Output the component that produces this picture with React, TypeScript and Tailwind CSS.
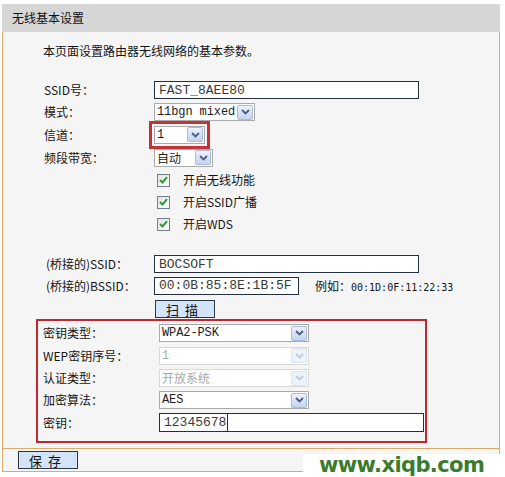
import React from "react";

const ArrowBtn = ({ disabled }: { disabled?: boolean }) => (
  <span
    className={`ml-auto mr-px flex h-[15px] w-[16px] shrink-0 items-center justify-center rounded-[2px] border ${
      disabled
        ? "border-[#dde4ef] bg-[#eef2f9]"
        : "border-[#a9bbdc] bg-gradient-to-b from-[#eef3fc] to-[#c3d3ee]"
    }`}
  >
    <svg width="9" height="6" viewBox="0 0 9 6">
      <path
        d="M1 1 L4.5 4.5 L8 1"
        fill="none"
        stroke={disabled ? "#c2cbdb" : "#4a5d80"}
        strokeWidth="1.8"
      />
    </svg>
  </span>
);

const Select = ({
  value,
  className,
  disabled,
  mono = true,
}: {
  value: string;
  className: string;
  disabled?: boolean;
  mono?: boolean;
}) => (
  <div
    className={`flex h-[18px] items-center overflow-hidden border bg-white pl-[2px] text-[12px] ${
      mono ? "font-['Liberation_Mono',monospace] tracking-[-0.1px]" : ""
    } ${
      disabled
        ? "border-[#d8d8d8] text-[#a9a9a9]"
        : "border-[#a9a9a9] text-[#1c1c1c]"
    } ${className}`}
  >
    <span className="whitespace-nowrap leading-none">{value}</span>
    <ArrowBtn disabled={disabled} />
  </div>
);

const TextInput = ({
  value,
  className,
}: {
  value: string;
  className: string;
}) => (
  <div
    className={`flex h-[18px] items-center border border-[#22303e] bg-white pl-[4px] font-['Liberation_Mono',monospace] text-[13px] leading-none text-[#3a3a3a] ${className}`}
  >
    {value}
  </div>
);

const Check = ({ label }: { label: string }) => (
  <div className="flex h-[22px] items-center">
    <span className="ml-[3px] flex h-[13px] w-[13px] items-center justify-center border border-[#6f8192] bg-gradient-to-br from-[#e2e2dc] to-white">
      <svg width="9" height="8" viewBox="0 0 9 8">
        <path d="M1 4 L3.5 6.5 L8 1.2" fill="none" stroke="#2d9a37" strokeWidth="2" />
      </svg>
    </span>
    <span className="ml-[13px]">{label}</span>
  </div>
);

const Row = ({
  label,
  children,
  h = "h-[22px]",
  pl = "pl-[41px]",
  lw = "w-[110px]",
}: {
  label?: string;
  children: React.ReactNode;
  h?: string;
  pl?: string;
  lw?: string;
}) => (
  <div className={`flex items-center ${h} ${pl}`}>
    <span className={`shrink-0 ${lw}`}>{label}</span>
    {children}
  </div>
);

export default function App() {
  return (
    <div className="relative h-[477px] w-[505px] overflow-hidden bg-white px-[2px] pt-[4px] font-['Noto_Sans_CJK_SC',sans-serif] text-[12px] text-[#141414]">
      <div className="w-[498px]">
        <div className="flex h-[28px] items-center bg-[#d6d6d6] pl-[10px] text-[12px] text-[#111]">
          无线基本设置
        </div>

        <div className="flex flex-col border-x border-b border-[#dcab68] bg-[#f5f5f5] pb-[5px]">
          <div className="mt-[10px] flex h-[18px] items-center pl-[40px]">
            本页面设置路由器无线网络的基本参数。
          </div>

          <div className="mt-[19px] flex flex-col">
            <Row label="SSID号：">
              <TextInput value="FAST_8AEE80" className="w-[265px]" />
            </Row>
            <Row label="模式：">
              <Select value="11bgn mixed" className="w-[101px]" />
            </Row>
            <Row label="信道：" h="h-[23px]">
              <div className="outline-[3px] outline-offset-[2px] outline-[#c1353a] outline">
                <Select value="1" className="w-[51px]" />
              </div>
            </Row>
            <Row label="频段带宽：" h="h-[23px]">
              <Select value="自动" mono={false} className="w-[59px]" />
            </Row>
            <Row>
              <Check label="开启无线功能" />
            </Row>
            <Row>
              <Check label="开启SSID广播" />
            </Row>
            <Row>
              <Check label="开启WDS" />
            </Row>
          </div>

          <div className="mt-[18px] flex flex-col">
            <Row label="(桥接的)SSID：" pl="pl-[43px]" lw="w-[108px]">
              <TextInput value="BOCSOFT" className="w-[265px]" />
            </Row>
            <Row label="(桥接的)BSSID：" pl="pl-[43px]" lw="w-[108px]" h="h-[21px]">
              <TextInput value="00:0B:85:8E:1B:5F" className="w-[145px]" />
              <span className="ml-[16px]">
                例如：
                <span className="font-['DejaVu_Sans_Mono',monospace] text-[10px]">
                  00:1D:0F:11:22:33
                </span>
              </span>
            </Row>
            <div className="mt-[4px] flex h-[18px] pl-[152px]">
              <button className="h-[18px] w-[60px] border border-[#2c3644] bg-[#d3e3f8] text-[13px] leading-none tracking-[6px] text-[#111]">
                扫描
              </button>
            </div>
          </div>

          <div className="ml-[33px] mt-[1px] flex w-[391px] flex-col border-[2px] border-[#c1272d] pb-[7px] pt-px">
            <Row label="密钥类型：" pl="pl-[5px]" lw="w-[116px]">
              <Select value="WPA2-PSK" className="w-[150px]" />
            </Row>
            <Row label="WEP密钥序号：" pl="pl-[5px]" lw="w-[116px]" h="h-[23px]">
              <Select value="1" disabled className="w-[150px]" />
            </Row>
            <Row label="认证类型：" pl="pl-[5px]" lw="w-[116px]" h="h-[22px]">
              <Select value="开放系统" mono={false} disabled className="w-[150px]" />
            </Row>
            <Row label="加密算法：" pl="pl-[5px]" lw="w-[116px]" h="h-[22px]">
              <Select value="AES" className="w-[150px]" />
            </Row>
            <Row label="密钥：" pl="pl-[5px]" lw="w-[116px]" h="h-[23px]">
              <div className="flex h-[19px] w-[265px] items-stretch border border-[#22303e] bg-white font-['Liberation_Mono',monospace] text-[13px] leading-none text-[#3a3a3a]">
                <span className="flex items-center pl-[4px]">12345678</span>
                <span className="ml-px w-px bg-[#22303e]" />
              </div>
            </Row>
          </div>
        </div>

        <div className="flex h-[23px] items-start border-x border-b border-[#dcab68] bg-[#f5f5f5] pl-[15px] pt-[2px]">
          <button className="h-[18px] w-[60px] border border-[#2c3644] bg-[#d3e3f8] text-[13px] leading-none tracking-[6px] text-[#111]">
            保存
          </button>
        </div>
      </div>

      <div className="absolute left-[303px] top-[454px] flex h-[24px] w-[205px] items-center bg-white pl-[16px] font-['DejaVu_Sans',sans-serif] text-[21px] font-bold tracking-[-0.6px] text-[#3b7b2c]">
        www.xiqb.com
      </div>
    </div>
  );
}
